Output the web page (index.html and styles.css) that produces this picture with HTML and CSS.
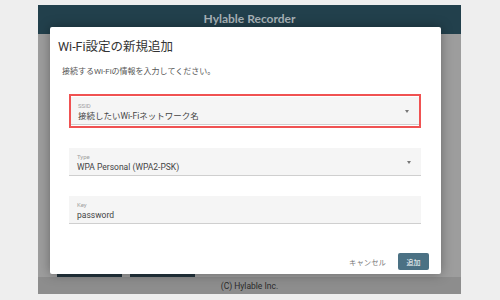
FILE: index.html
```html
<!DOCTYPE html>
<html lang="ja">
<head>
    <meta charset="UTF-8">
    <meta name="viewport" content="width=device-width, initial-scale=1.0">
    <title>Hylable Recorder</title>
    <link rel="stylesheet" href="styles.css">
</head>
<body>
    <div class="app">
        <div class="app-header">Hylable Recorder</div>
        <div class="app-main">
            <div class="bg-button"></div>
            <div class="bg-button"></div>
        </div>
        <div class="app-footer">(C) Hylable Inc.</div>

        <div class="dialog">
            <h2 class="dialog-title">Wi-Fi設定の新規追加</h2>
            <p class="dialog-text">接続するWi-Fiの情報を入力してください。</p>

            <div class="field-list">
                <div class="highlight">
                    <div class="field">
                        <span class="field-label">SSID</span>
                        <span class="field-value">接続したいWi-Fiネットワーク名</span>
                        <span class="field-arrow"></span>
                    </div>
                </div>
                <div class="field">
                    <span class="field-label">Type</span>
                    <span class="field-value">WPA Personal (WPA2-PSK)</span>
                    <span class="field-arrow"></span>
                </div>
                <div class="field">
                    <span class="field-label">Key</span>
                    <span class="field-value">password</span>
                </div>
            </div>

            <div class="dialog-actions">
                <button class="text-button">キャンセル</button>
                <button class="primary-button">追加</button>
            </div>
        </div>
    </div>
</body>
</html>
```

FILE: styles.css
```css
* {
    margin: 0;
    padding: 0;
    box-sizing: border-box;
}

body {
    background-color: #eeeeee;
    font-family: Roboto, "Noto Sans CJK JP", sans-serif;
    color: #333333;
}

.app {
    position: relative;
    width: 423px;
    height: 289px;
    margin: 5px 0 0 38px;
    display: flex;
    flex-direction: column;
}

.app-header {
    height: 29px;
    line-height: 27px;
    background-color: #22404c;
    color: #a8b2b7;
    text-align: center;
    font-family: Lato, sans-serif;
    font-weight: 700;
    font-size: 12px;
}

.app-main {
    flex: 1;
    background-color: #9d9d9d;
    display: flex;
    align-items: flex-end;
    gap: 8px;
    padding-left: 19px;
}

.bg-button {
    width: 65px;
    height: 20px;
    background-color: #23343d;
}

.app-footer {
    height: 17px;
    line-height: 19px;
    background-color: #8d8d8d;
    color: #2a2a2a;
    text-align: center;
    font-size: 8.5px;
}

.dialog {
    position: absolute;
    left: 12px;
    top: 22px;
    width: 391px;
    height: 247px;
    background-color: #ffffff;
    border-radius: 2px;
    box-shadow: 0 0 12px rgba(0, 0, 0, 0.35);
    padding: 10px 20px 0 8px;
    display: flex;
    flex-direction: column;
}

.dialog-title {
    font-weight: 400;
    font-size: 12.5px;
    line-height: 20px;
    color: #333333;
}

.dialog-text {
    margin-top: 8px;
    padding-left: 4px;
    font-size: 8px;
    line-height: 14px;
    color: #555555;
}

.field-list {
    margin-top: 15px;
    padding-left: 11px;
    display: flex;
    flex-direction: column;
    gap: 20px;
}

.highlight {
    border: 2px solid #f05252;
    padding: 1px 0;
}

.field {
    position: relative;
    height: 28px;
    padding: 4px 8px 0;
    background-color: #f5f5f5;
    border-bottom: 1px solid #cfcfcf;
    display: flex;
    flex-direction: column;
}

.highlight .field {
    padding-left: 7px;
}

.field-label {
    font-size: 6px;
    line-height: 9px;
    color: #a0a0a0;
}

.field-value {
    font-size: 8.5px;
    line-height: 13px;
    color: #444444;
}

.field-arrow {
    position: absolute;
    right: 10px;
    top: 13px;
    width: 0;
    height: 0;
    border-left: 2.5px solid transparent;
    border-right: 2.5px solid transparent;
    border-top: 3px solid #777777;
}

.dialog-actions {
    margin-top: auto;
    margin-bottom: 4px;
    display: flex;
    justify-content: flex-end;
    align-items: center;
    gap: 12px;
    margin-right: -8px;
}

.text-button {
    background: none;
    border: none;
    font-family: inherit;
    font-size: 7.4px;
    color: #777777;
}

.primary-button {
    width: 31px;
    height: 17px;
    border: none;
    border-radius: 2px;
    background-color: #4b7184;
    color: #ffffff;
    font-family: inherit;
    font-size: 7px;
}
```
